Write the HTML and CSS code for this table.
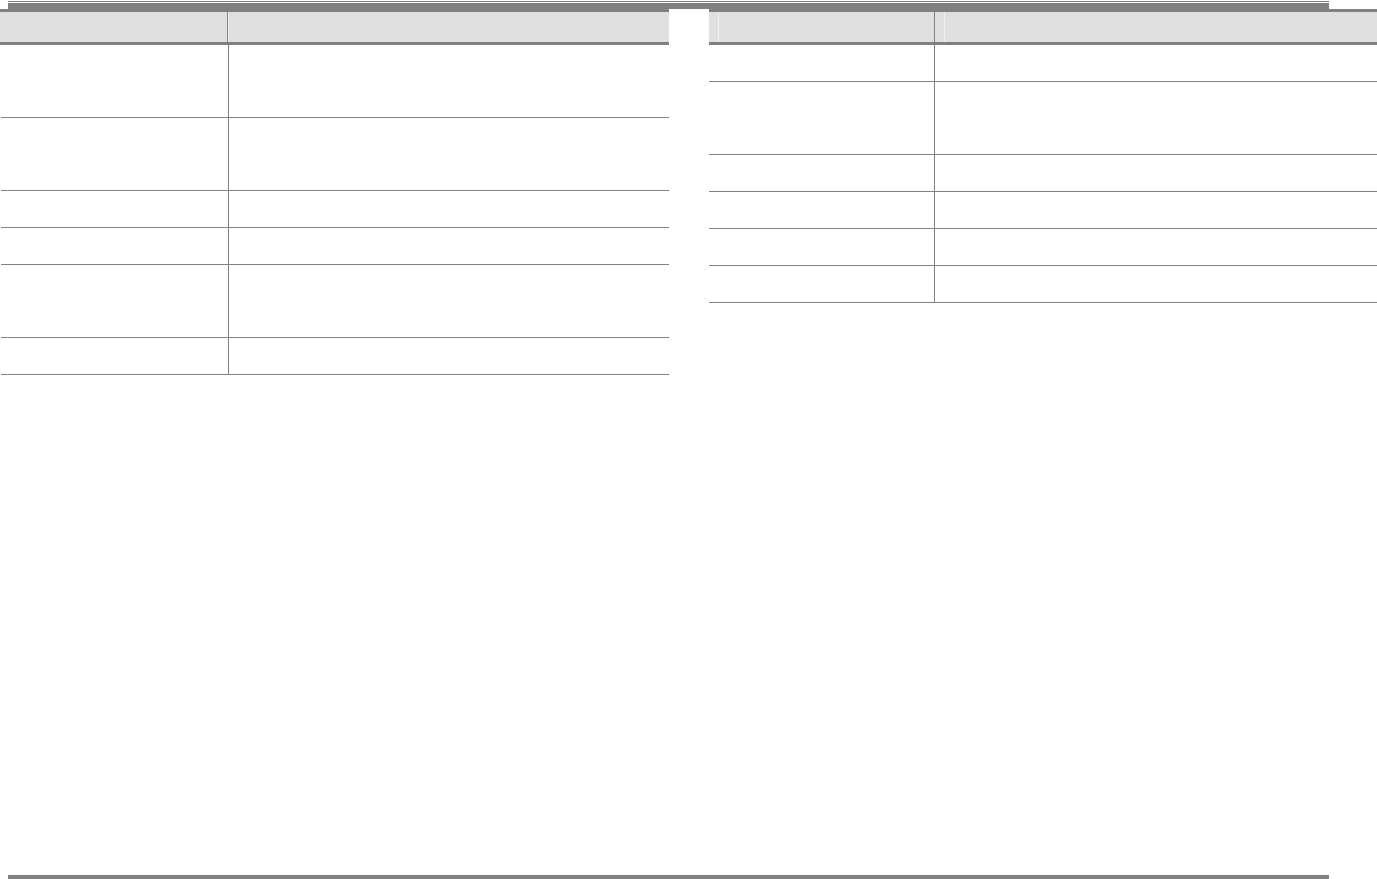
FILE: index.html
```html
<!DOCTYPE html>
<html lang="en">
<head>
<meta charset="utf-8">
<title>Tables</title>
<link rel="stylesheet" href="styles.css">
</head>
<body>
<div class="page">
  <div class="rule-thin"></div>
  <div class="rule-bar"></div>
  <div class="tables">
    <div class="table table-left">
      <div class="thead">
        <div class="th th-key"></div>
        <div class="th th-val"></div>
      </div>
      <div class="row tall"><div class="td key"></div><div class="td"></div></div>
      <div class="row tall"><div class="td key"></div><div class="td"></div></div>
      <div class="row"><div class="td key"></div><div class="td"></div></div>
      <div class="row"><div class="td key"></div><div class="td"></div></div>
      <div class="row tall"><div class="td key"></div><div class="td"></div></div>
      <div class="row"><div class="td key"></div><div class="td"></div></div>
    </div>
    <div class="table table-right">
      <div class="thead">
        <div class="th"></div>
        <div class="th th-key"></div>
        <div class="th"></div>
        <div class="th th-val"></div>
      </div>
      <div class="row"><div class="td key"></div><div class="td"></div></div>
      <div class="row tall"><div class="td key"></div><div class="td"></div></div>
      <div class="row"><div class="td key"></div><div class="td"></div></div>
      <div class="row"><div class="td key"></div><div class="td"></div></div>
      <div class="row"><div class="td key"></div><div class="td"></div></div>
      <div class="row"><div class="td key"></div><div class="td"></div></div>
    </div>
  </div>
  <div class="rule-foot"></div>
</div>
</body>
</html>
```

FILE: styles.css
```css
html, body {
  margin: 0;
  padding: 0;
  background: #ffffff;
  font-family: "Liberation Sans", Arial, sans-serif;
}

.page {
  height: 879px;
  display: flex;
  flex-direction: column;
  overflow: hidden;
}

.rule-thin {
  margin: 1px 0 0 8px;
  width: 1321px;
  height: 1px;
  background: #808080;
  flex: none;
}

.rule-bar {
  margin: 1px 0 0 8px;
  width: 1321px;
  height: 6px;
  background: #808080;
  flex: none;
}

.tables {
  display: flex;
  gap: 40px;
  align-items: flex-start;
  flex: none;
}

.table {
  border-top: 3px solid #808080;
}

.table-left {
  width: 669px;
}

.table-right {
  width: 668px;
}

.thead {
  display: grid;
  height: 33px;
  box-sizing: border-box;
  background: #dfdfdf;
  border-bottom: 3px solid #808080;
}

.table-left .thead {
  grid-template-columns: 228px 1fr;
}

.table-right .thead {
  grid-template-columns: 9px 217px 9px 1fr;
}

.table-left .th-key {
  border-right: 1px solid #808080;
}

.table-left .th-val {
  border-left: 1px solid #efefef;
}

.table-right .th-key {
  border-left: 1px solid #efefef;
  border-right: 1px solid #808080;
}

.table-right .th-val {
  border-left: 1px solid #efefef;
}

.row {
  display: grid;
  height: 37px;
  box-sizing: border-box;
  border-bottom: 1px solid #808080;
}

.row.tall {
  height: 73px;
}

.table-left .row {
  grid-template-columns: 228px 1fr;
  margin-left: 1px;
}

.table-left .row .key {
  width: 227px;
}

.table-left .row {
  grid-template-columns: 227px 1fr;
}

.table-right .row {
  grid-template-columns: 226px 1fr;
}

.td.key {
  border-right: 1px solid #808080;
}

.rule-foot {
  margin: auto 0 0 8px;
  width: 1321px;
  height: 4px;
  background: #808080;
  flex: none;
}
```
